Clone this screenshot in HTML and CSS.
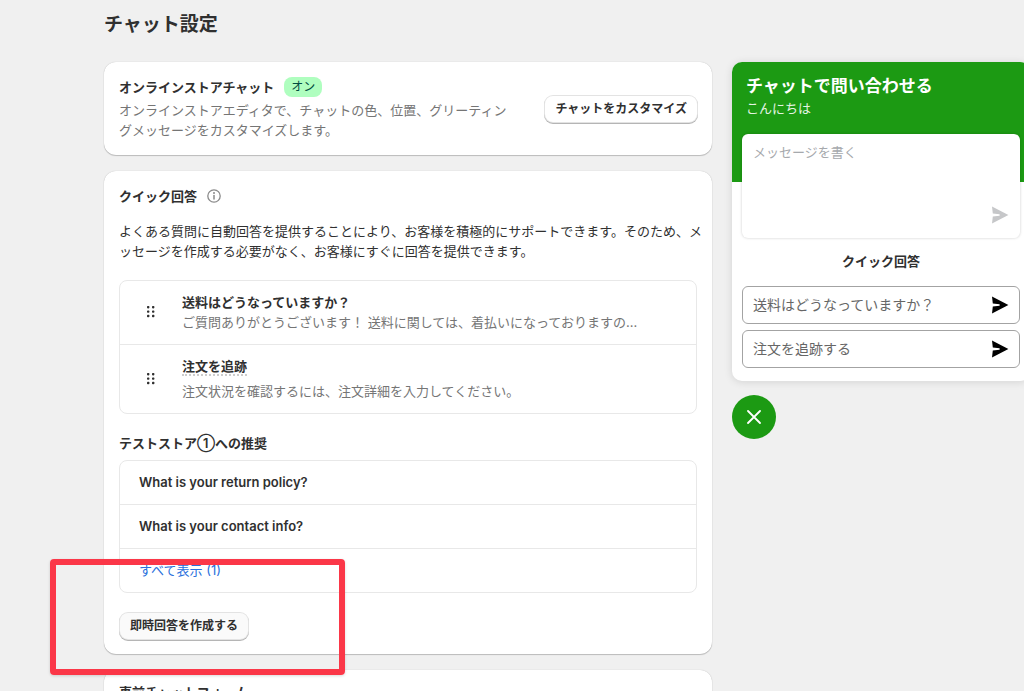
FILE: index.html
```
<!DOCTYPE html>
<html lang="ja">
<head>
<meta charset="utf-8">
<meta name="viewport" content="width=device-width, initial-scale=1">
<title>チャット設定</title>
<link rel="stylesheet" href="styles.css">
</head>
<body>
<svg class="sprite" aria-hidden="true">
  <symbol id="send" viewBox="0 0 18 18"><path d="M1 .4 17.4 9 1 17.6 1.8 10.6 8.6 9.7V8.3L1.8 7.4Z"/></symbol>
  <symbol id="grip" viewBox="0 0 8 12"><g><rect x="0" y="0" width="2.4" height="2.4" rx=".8"/><rect x="5" y="0" width="2.4" height="2.4" rx=".8"/><rect x="0" y="4.4" width="2.4" height="2.4" rx=".8"/><rect x="5" y="4.4" width="2.4" height="2.4" rx=".8"/><rect x="0" y="8.8" width="2.4" height="2.4" rx=".8"/><rect x="5" y="8.8" width="2.4" height="2.4" rx=".8"/></g></symbol>
</svg>
<div class="page">
  <main class="settings">
    <h1 class="page-title">チャット設定</h1>

    <section class="card status">
      <div class="status-text">
        <div class="heading-row">
          <h2 class="heading">オンラインストアチャット</h2>
          <span class="badge">オン</span>
        </div>
        <p class="muted">オンラインストアエディタで、チャットの色、位置、グリーティン<br>グメッセージをカスタマイズします。</p>
      </div>
      <button class="btn" type="button">チャットをカスタマイズ</button>
    </section>

    <section class="card quick">
      <div class="heading-row">
        <h2 class="heading">クイック回答</h2>
        <svg class="info" viewBox="0 0 14 14" aria-hidden="true"><circle cx="7" cy="7" r="6.2" fill="none" stroke="currentColor" stroke-width="1.3"/><path d="M7 6.4V10" stroke="currentColor" stroke-width="1.5" stroke-linecap="round"/><circle cx="7" cy="4.1" r="1" fill="currentColor"/></svg>
      </div>
      <p class="intro">よくある質問に自動回答を提供することにより、お客様を積極的にサポートできます。そのため、メ<br>ッセージを作成する必要がなく、お客様にすぐに回答を提供できます。</p>

      <ul class="list">
        <li class="answer">
          <svg class="grip" aria-hidden="true"><use href="#grip"/></svg>
          <div class="answer-text">
            <h3 class="answer-title">送料はどうなっていますか？</h3>
            <p class="muted">ご質問ありがとうございます！ 送料に関しては、着払いになっておりますの...</p>
          </div>
        </li>
        <li class="answer">
          <svg class="grip" aria-hidden="true"><use href="#grip"/></svg>
          <div class="answer-text spaced">
            <h3 class="answer-title"><span class="dotted">注文を追跡</span></h3>
            <p class="muted">注文状況を確認するには、注文詳細を入力してください。</p>
          </div>
        </li>
      </ul>

      <h2 class="heading suggested">テストストア<span class="circled">①</span>への推奨</h2>
      <ul class="list">
        <li class="suggestion">What is your return policy?</li>
        <li class="suggestion">What is your contact info?</li>
        <li class="suggestion"><a class="link" href="#all">すべて表示 (1)</a></li>
      </ul>
      <button class="btn create" type="button">即時回答を作成する</button>
    </section>

    <section class="card form">
      <h2 class="heading">事前チャットフォーム</h2>
    </section>
  </main>

  <aside class="preview">
    <div class="chat">
      <header class="chat-header">
        <h2 class="chat-title">チャットで問い合わせる</h2>
        <p class="greeting">こんにちは</p>
      </header>
      <div class="chat-body">
        <div class="composer">
          <textarea class="message" aria-label="メッセージ" placeholder="メッセージを書く"></textarea>
          <button class="send" type="button" aria-label="送信"><svg class="send-icon"><use href="#send"/></svg></button>
        </div>
        <h3 class="chat-heading">クイック回答</h3>
        <button class="reply" type="button"><span>送料はどうなっていますか？</span><svg class="send-icon"><use href="#send"/></svg></button>
        <button class="reply" type="button"><span>注文を追跡する</span><svg class="send-icon"><use href="#send"/></svg></button>
      </div>
    </div>
    <button class="close" type="button" aria-label="閉じる"><svg class="close-icon" viewBox="0 0 14 14"><path d="M1 1 13 13M13 1 1 13" stroke="currentColor" stroke-width="1.8" stroke-linecap="round"/></svg></button>
  </aside>
</div>
<div class="highlight"></div>
</body>
</html>
```
FILE: styles.css
```
* { box-sizing: border-box; }

html { overflow: hidden; }

body {
  margin: 0;
  background: #f0f0f0;
  color: #303030;
  font-family: Inter, "Noto Sans CJK JP", sans-serif;
  font-size: 13px;
  line-height: 20px;
}

h1, h2, h3, p, ul { margin: 0; padding: 0; }
ul { list-style: none; }
button, textarea { font: inherit; color: inherit; }

.sprite { display: none; }

.page {
  display: grid;
  grid-template-columns: minmax(0, 1fr) 298px;
  gap: 20px;
  margin-right: -6px;
  padding-left: 104px;
}

.settings {
  display: flex;
  flex-direction: column;
  gap: 16px;
  padding-top: 13px;
}

.page-title {
  margin-bottom: 9px;
  font-size: 19px;
  line-height: 24px;
  font-weight: 700;
}

.card {
  padding: 15px;
  background: #fff;
  border-radius: 12px;
  box-shadow: 0 1px 1px rgba(0, 0, 0, .2), 0 0 1px rgba(0, 0, 0, .25);
}

.status {
  display: flex;
  align-items: center;
  justify-content: space-between;
}
.form { padding-top: 12px; }

.heading-row { display: flex; align-items: center; gap: 10px; }
.heading { font-size: 13px; line-height: 20px; font-weight: 700; }
.status .heading-row { margin-bottom: 3px; }

.badge {
  padding: 0 7px;
  border-radius: 8px;
  background: #affebf;
  color: #014b40;
  font-size: 12px;
}

.muted { color: #757575; white-space: nowrap; }

.btn {
  height: 26px;
  padding: 0 10px;
  border: 0;
  border-radius: 8px;
  background: #fff;
  box-shadow: 0 0 0 1px #e3e3e3, 0 1px 0 1px #b5b5b5;
  font-size: 12px;
  line-height: 20px;
  font-weight: 700;
  white-space: nowrap;
}

.info { width: 14px; height: 14px; color: #8a8a8a; }
.intro { margin: 15px 0 19px; white-space: nowrap; }

.list { border: 1px solid #e8e8e8; border-radius: 8px; }
.list > li + li { border-top: 1px solid #e8e8e8; }

.answer {
  display: flex;
  align-items: center;
  gap: 27px;
  padding: 11px 16px 12px 27px;
}
.grip { width: 8px; height: 12px; fill: #303030; }
.answer-title { font-size: 13px; line-height: 20px; font-weight: 700; }
.spaced .answer-title { margin-bottom: 5px; }
.dotted { border-bottom: 2px dotted #ccc; }

.suggested { margin: 19px 0 7px; }
.circled { font-weight: 600; }
.suggestion {
  padding: 11px 19px 12px;
  font-weight: 600;
}
.link { color: #2a70dc; font-weight: 400; text-decoration: none; }
.create { margin: 20px 0 0 1px; background: #fafafa; }

.preview { padding-top: 62px; }
.chat {
  overflow: hidden;
  border-radius: 10px;
  background: #fff;
  box-shadow: 0 1px 8px rgba(0, 0, 0, .12);
}
.chat-header {
  height: 120px;
  padding: 12px 14px;
  background: #1c9a13;
  color: #fff;
}
.chat-title { font-size: 17px; line-height: 24px; font-weight: 700; }
.greeting { color: #e4f4e3; }
.chat-body {
  display: flex;
  flex-direction: column;
  gap: 6px;
  margin-top: -48px;
  padding: 0 10px 13px;
}
.composer {
  display: flex;
  align-items: flex-end;
  height: 104px;
  padding: 8px 11px 14px;
  border-radius: 6px;
  background: #fff;
  box-shadow: 0 0 3px rgba(0, 0, 0, .2);
}
.message {
  flex: 1;
  align-self: stretch;
  min-width: 0;
  padding: 0;
  border: 0;
  outline: 0;
  resize: none;
  background: transparent;
}
.message::placeholder { color: #a6a9ad; opacity: 1; }
.send { display: flex; padding: 0; border: 0; background: none; }
.send-icon { flex: none; width: 18px; height: 18px; fill: #000; }
.send .send-icon { fill: #c6c7c9; }
.chat-heading {
  margin: 7px 0 9px;
  font-size: 13px;
  line-height: 20px;
  font-weight: 700;
  text-align: center;
}
.reply {
  display: flex;
  align-items: center;
  justify-content: space-between;
  height: 38px;
  padding: 0 10px;
  border: 1px solid #a3a3a3;
  border-radius: 6px;
  background: #fff;
  color: #666;
  font-size: 14px;
}
.close {
  display: flex;
  align-items: center;
  justify-content: center;
  width: 44px;
  height: 44px;
  margin-top: 14px;
  padding: 0;
  border: 0;
  border-radius: 50%;
  background: #1c9a13;
  color: #fff;
}
.close-icon { width: 14px; height: 14px; }

/* Annotation frame lying over the page */
.highlight {
  position: absolute;
  left: 50px;
  top: 559px;
  width: 295px;
  height: 116px;
  border: 6px solid #fb3748;
  border-radius: 4px;
  box-shadow: 0 1px 3px rgba(0, 0, 0, .15);
  pointer-events: none;
}
```
